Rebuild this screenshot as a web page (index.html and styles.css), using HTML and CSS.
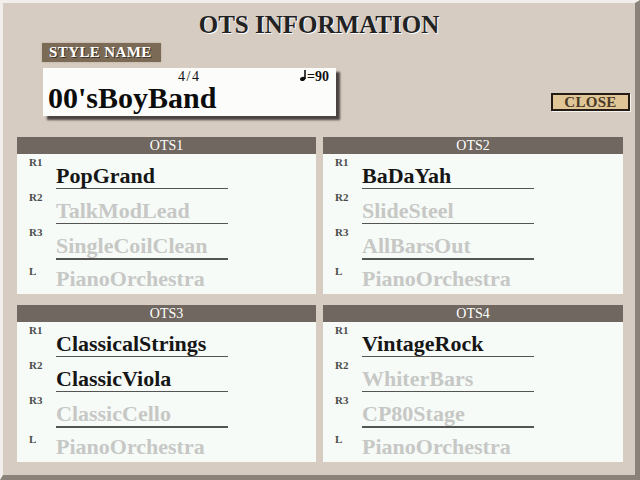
FILE: index.html
```html
<!DOCTYPE html>
<html lang="en">
<head>
    <meta charset="UTF-8" />
    <meta name="viewport" content="width=device-width, initial-scale=1" />
    <title>OTS Information</title>
    <link rel="stylesheet" href="styles.css">
</head>
<body>
    <div class="window">
        <h1 class="title">OTS INFORMATION</h1>
        <div class="style-area">
            <div class="style-info">
                <div class="style-label">STYLE NAME</div>
                <div class="style-box">
                    <div class="style-meta">
                        <span class="beat">4/4</span>
                        <span class="tempo">
                            <svg class="note" width="6" height="11" viewBox="0 0 6 11">
                                <ellipse cx="2.7" cy="8.9" rx="2.7" ry="2.1" transform="rotate(-18 2.7 8.9)" />
                                <rect x="4.2" y="0" width="1.6" height="9" />
                            </svg>=90
                        </span>
                    </div>
                    <div class="style-name">00'sBoyBand</div>
                </div>
            </div>
            <button class="btn-close">CLOSE</button>
        </div>
        <main class="ots-grid">
            <section class="ots">
                <h2 class="ots-title">OTS1</h2>
                <div class="ots-body">
                    <div class="part"><span class="part-label">R1</span><span class="voice">PopGrand</span></div>
                    <div class="part"><span class="part-label">R2</span><span class="voice off">TalkModLead</span></div>
                    <div class="part r3"><span class="part-label">R3</span><span class="voice off">SingleCoilClean</span></div>
                    <div class="part left"><span class="part-label">L</span><span class="voice off">PianoOrchestra</span></div>
                </div>
            </section>
            <section class="ots">
                <h2 class="ots-title">OTS2</h2>
                <div class="ots-body">
                    <div class="part"><span class="part-label">R1</span><span class="voice">BaDaYah</span></div>
                    <div class="part"><span class="part-label">R2</span><span class="voice off">SlideSteel</span></div>
                    <div class="part r3"><span class="part-label">R3</span><span class="voice off">AllBarsOut</span></div>
                    <div class="part left"><span class="part-label">L</span><span class="voice off">PianoOrchestra</span></div>
                </div>
            </section>
            <section class="ots">
                <h2 class="ots-title">OTS3</h2>
                <div class="ots-body">
                    <div class="part"><span class="part-label">R1</span><span class="voice">ClassicalStrings</span></div>
                    <div class="part"><span class="part-label">R2</span><span class="voice">ClassicViola</span></div>
                    <div class="part r3"><span class="part-label">R3</span><span class="voice off">ClassicCello</span></div>
                    <div class="part left"><span class="part-label">L</span><span class="voice off">PianoOrchestra</span></div>
                </div>
            </section>
            <section class="ots">
                <h2 class="ots-title">OTS4</h2>
                <div class="ots-body">
                    <div class="part"><span class="part-label">R1</span><span class="voice">VintageRock</span></div>
                    <div class="part"><span class="part-label">R2</span><span class="voice off">WhiterBars</span></div>
                    <div class="part r3"><span class="part-label">R3</span><span class="voice off">CP80Stage</span></div>
                    <div class="part left"><span class="part-label">L</span><span class="voice off">PianoOrchestra</span></div>
                </div>
            </section>
        </main>
    </div>
</body>
</html>
```

FILE: styles.css
```css
:root {
    --frame: #d6ccc2;
    --header: #706760;
    --panel: #f6fbf8;
    --label-brown: #7b6a55;
    --tan: #e0c597;
    --dark: #161616;
    --gray-text: #c7c8c5;
    --line: #545454;
}
* {
    margin: 0;
    padding: 0;
    box-sizing: border-box;
    font-family: 'Liberation Serif', 'Times New Roman', serif;
}
body {
    width: 640px;
    height: 480px;
    overflow: hidden;
    background-color: var(--frame);
}
.window {
    width: 640px;
    height: 480px;
    background-color: var(--frame);
    border-top: 3px solid #f1eeeb;
    border-left: 3px solid #f1eeeb;
    border-right: 5px solid #8b827a;
    border-bottom: 5px solid #8b827a;
}
/* Title */
.title {
    padding-top: 8px;
    font-size: 25px;
    line-height: 28px;
    font-weight: 700;
    text-align: center;
    color: #222;
    text-shadow: 1px 1px 0 #fbfbfb;
}
/* Style name */
.style-area {
    display: flex;
    margin-top: 4px;
    padding-left: 39px;
}
.style-label {
    width: 119px;
    height: 19px;
    padding-left: 7px;
    background-color: var(--label-brown);
    color: #fff;
    font-size: 15px;
    line-height: 19px;
    font-weight: 700;
    letter-spacing: 0.4px;
    text-shadow: 1px 1px 0 #3e3428;
    box-shadow: 0 0 2px #b9ab98;
}
.style-box {
    width: 293px;
    height: 48px;
    margin-top: 6px;
    margin-left: 1px;
    padding: 2px 7px 5px 5px;
    background-color: #fcfdfb;
    box-shadow: 4px 4px 2px #4a4440;
}
.style-meta {
    display: flex;
    height: 13px;
    font-size: 14px;
    line-height: 13px;
    color: #111;
}
.beat {
    margin-left: 130px;
    letter-spacing: 1.5px;
}
.tempo {
    display: flex;
    align-items: flex-end;
    margin-left: auto;
    font-weight: 700;
}
.note {
    margin-right: 1px;
    margin-bottom: 2px;
    fill: #111;
}
.style-name {
    margin-top: 2px;
    font-size: 30px;
    line-height: 26px;
    font-weight: 700;
    color: #0c0c0c;
}
.btn-close {
    width: 79px;
    height: 18px;
    margin-top: 50px;
    margin-left: auto;
    margin-right: 5px;
    background-color: var(--tan);
    border: 2px solid #241c14;
    box-shadow: 1px 1px 0 #f7f3ee;
    color: #4a3a27;
    font-size: 15px;
    line-height: 14px;
    font-weight: 700;
    letter-spacing: 0.3px;
}
/* OTS panels */
.ots-grid {
    display: grid;
    grid-template-columns: 299px 300px;
    column-gap: 7px;
    row-gap: 11px;
    margin-top: 21px;
    margin-left: 14px;
}
.ots-title {
    height: 17px;
    padding-top: 1px;
    background-color: var(--header);
    color: #fff;
    font-size: 14px;
    line-height: 16px;
    font-weight: 400;
    text-align: center;
}
.ots-body {
    height: 140px;
    padding-left: 12px;
    background-color: var(--panel);
}
.part {
    display: flex;
}
.part-label {
    width: 27px;
    padding-top: 2px;
    font-size: 11px;
    line-height: 12px;
    font-weight: 700;
    color: #4c4c4c;
}
.voice {
    width: 172px;
    height: 35px;
    padding-top: 10px;
    font-size: 22px;
    line-height: 24px;
    font-weight: 700;
    color: var(--dark);
    border-bottom: 1px solid var(--line);
    white-space: nowrap;
}
.voice.off {
    color: var(--gray-text);
}
.r3 .voice {
    height: 36px;
    border-bottom: 2px solid var(--line);
}
.left .part-label {
    padding-top: 5px;
}
.left .voice {
    height: 31px;
    padding-top: 7px;
    border-bottom: none;
}
```
